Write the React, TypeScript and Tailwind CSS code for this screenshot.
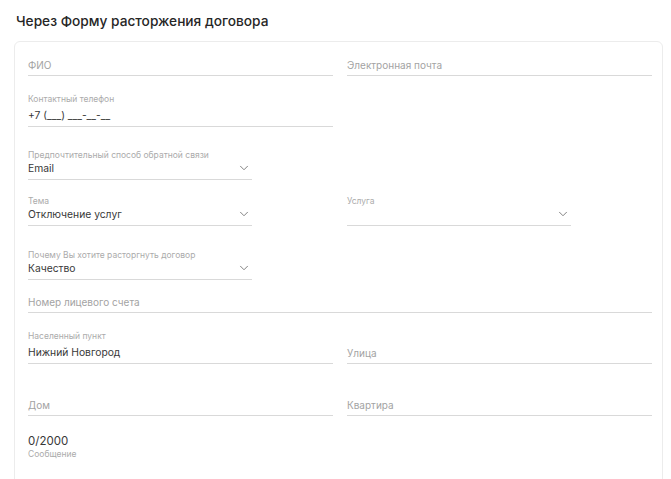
import { ChevronDown } from "lucide-react";

type FieldProps = {
  label?: string;
  value?: string;
  placeholder?: string;
  select?: boolean;
  className?: string;
};

const Field = ({ label, value, placeholder, select, className = "" }: FieldProps) => {
  return (
    <div className={`relative border-b border-[#d9d9d9] ${label ? "pb-[3px]" : "pb-[2px]"} ${className}`}>
      {label && (
        <div className={`text-[8.5px] leading-[10px] text-[#ababab] ${select ? "" : "mb-[3px]"}`}>{label}</div>
      )}
      {placeholder ? (
        <div className="text-[10px] leading-[16px] text-[#a3a3a3]">{placeholder}</div>
      ) : (
        <div className="text-[10.3px] leading-[16px] text-[#383838] h-[16px]">{value}</div>
      )}
      {select && (
        <ChevronDown className="absolute right-[1px] bottom-[4px] w-[14px] h-[14px] text-[#707070]" strokeWidth={1.5} />
      )}
    </div>
  );
};

const App = () => {
  return (
    <div className="min-h-screen bg-white font-['Inter',sans-serif] pt-[12px]">
      <h1 className="ml-[16px] text-[13.7px] leading-[18px] font-medium text-[#262626]">
        Через Форму расторжения договора
      </h1>

      <div className="ml-[14px] mt-[11px] w-[649px] h-[460px] rounded-[6px] border border-[#ececec] pl-[13px] pr-[10px] pt-[15px]">
        <div className="grid grid-cols-2 gap-x-[14px]">
          <Field placeholder="ФИО" />
          <Field placeholder="Электронная почта" />
        </div>

        <div className="grid grid-cols-2 gap-x-[14px] mt-[18px]">
          <Field label="Контактный телефон" value="+7 (___) ___-__-__" />
        </div>

        <div className="mt-[23px]">
          <Field label="Предпочтительный способ обратной связи" value="Email" select className="w-[224px]" />
        </div>

        <div className="grid grid-cols-2 gap-x-[14px] mt-[16px]">
          <Field label="Тема" value="Отключение услуг" select className="w-[224px]" />
          <Field label="Услуга" value="" select className="w-[224px]" />
        </div>

        <div className="mt-[24px]">
          <Field label="Почему Вы хотите расторгнуть договор" value="Качество" select className="w-[224px]" />
        </div>

        <div className="mt-[14px]">
          <Field placeholder="Номер лицевого счета" />
        </div>

        <div className="grid grid-cols-2 gap-x-[14px] items-end mt-[18px]">
          <Field label="Населенный пункт" value="Нижний Новгород" />
          <Field placeholder="Улица" />
        </div>

        <div className="grid grid-cols-2 gap-x-[14px] mt-[33px]">
          <Field placeholder="Дом" />
          <Field placeholder="Квартира" />
        </div>

        <div className="mt-[17px]">
          <div className="text-[11.5px] leading-[16px] text-[#383838]">0/2000</div>
          <div className="text-[8.5px] leading-[10px] text-[#ababab]">Сообщение</div>
        </div>
      </div>
    </div>
  );
};

export default App;
